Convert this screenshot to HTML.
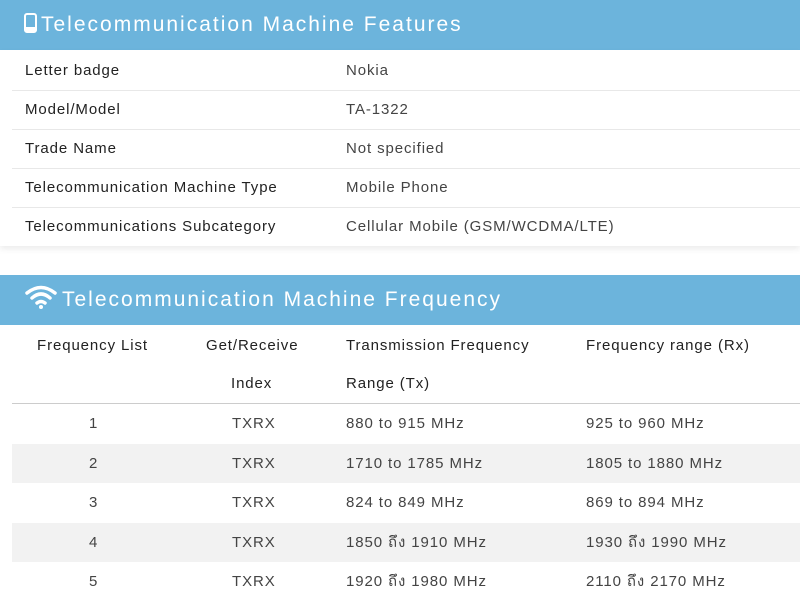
<!DOCTYPE html><html><head><style>
body{margin:0;width:800px;height:595px;overflow:hidden;background:#fff;font-family:"Liberation Sans","DejaVu Sans",sans-serif;color:#333;position:relative}
.hd{position:absolute;left:0;width:800px;height:50px;background:#6cb4dc;color:#fff;font-size:21px;letter-spacing:2px}
.hd span{position:absolute;top:13px;line-height:24px}
.r{position:absolute;left:12px;width:788px;height:39px;border-bottom:1px solid #e8e8e8;font-size:15px;letter-spacing:0.9px}
.r b{position:absolute;left:13px;top:11px;font-weight:normal;color:#222;line-height:18px}
.r i{position:absolute;left:334px;top:11px;font-style:normal;color:#444;line-height:18px}
.t{position:absolute;font-size:15px;color:#222;letter-spacing:0.9px;line-height:18px}
.fr{position:absolute;left:12px;width:788px;height:39.5px;font-size:15px;color:#444;letter-spacing:0.9px}
.fr span{position:absolute;top:11px;line-height:18px;height:18px;overflow:visible}
</style></head><body>
<div class="hd" style="top:0"><svg style="position:absolute;left:24px;top:13px" width="13" height="20" viewBox="0 0 13 20"><rect x="1" y="1" width="11" height="18" rx="2" fill="none" stroke="#fff" stroke-width="2"/><rect x="1" y="14" width="11" height="5" fill="#fff"/></svg><span style="left:41px">Telecommunication Machine Features</span></div>
<div style="position:absolute;left:0;top:50px;width:800px;height:196px;box-shadow:0 3px 6px rgba(0,0,0,.08)"></div>
<div class="r" style="top:51px"><b>Letter badge</b><i>Nokia</i></div>
<div class="r" style="top:90px"><b>Model/Model</b><i>TA-1322</i></div>
<div class="r" style="top:129px"><b>Trade Name</b><i>Not specified</i></div>
<div class="r" style="top:168px"><b>Telecommunication Machine Type</b><i>Mobile Phone</i></div>
<div class="r" style="top:207px;border:none"><b>Telecommunications Subcategory</b><i>Cellular Mobile (GSM/WCDMA/LTE)</i></div>
<div class="hd" style="top:275px"><svg style="position:absolute;left:25px;top:10px" width="32" height="24" viewBox="0 0 32 24"><path d="M2 8 Q16 -3 30 8" fill="none" stroke="#fff" stroke-width="3.5" stroke-linecap="round"/><path d="M7 13 Q16 5 25 13" fill="none" stroke="#fff" stroke-width="3.5" stroke-linecap="round"/><path d="M12 18 Q16 15 20 18" fill="none" stroke="#fff" stroke-width="3.5" stroke-linecap="round"/><circle cx="16" cy="22" r="2" fill="#fff"/></svg><span style="left:62px">Telecommunication Machine Frequency</span></div>
<div class="t" style="left:37px;top:337px">Frequency List</div>
<div class="t" style="left:206px;top:337px">Get/Receive</div>
<div class="t" style="left:231px;top:375px">Index</div>
<div class="t" style="left:346px;top:337px">Transmission Frequency</div>
<div class="t" style="left:346px;top:375px">Range (Tx)</div>
<div class="t" style="left:586px;top:337px">Frequency range (Rx)</div>
<div style="position:absolute;left:12px;top:403px;width:788px;height:1px;background:#ccc"></div>
<div class="fr" style="top:404px"><span style="left:77px">1</span><span style="left:220px">TXRX</span><span style="left:334px">880 to 915 MHz</span><span style="left:574px">925 to 960 MHz</span></div>
<div class="fr" style="top:443.5px;background:#f2f2f2"><span style="left:77px">2</span><span style="left:220px">TXRX</span><span style="left:334px">1710 to 1785 MHz</span><span style="left:574px">1805 to 1880 MHz</span></div>
<div class="fr" style="top:483px"><span style="left:77px">3</span><span style="left:220px">TXRX</span><span style="left:334px">824 to 849 MHz</span><span style="left:574px">869 to 894 MHz</span></div>
<div class="fr" style="top:522.5px;background:#f2f2f2"><span style="left:77px">4</span><span style="left:220px">TXRX</span><span style="left:334px">1850 ถึง 1910 MHz</span><span style="left:574px">1930 ถึง 1990 MHz</span></div>
<div class="fr" style="top:562px"><span style="left:77px">5</span><span style="left:220px">TXRX</span><span style="left:334px">1920 ถึง 1980 MHz</span><span style="left:574px">2110 ถึง 2170 MHz</span></div>
</body></html>
